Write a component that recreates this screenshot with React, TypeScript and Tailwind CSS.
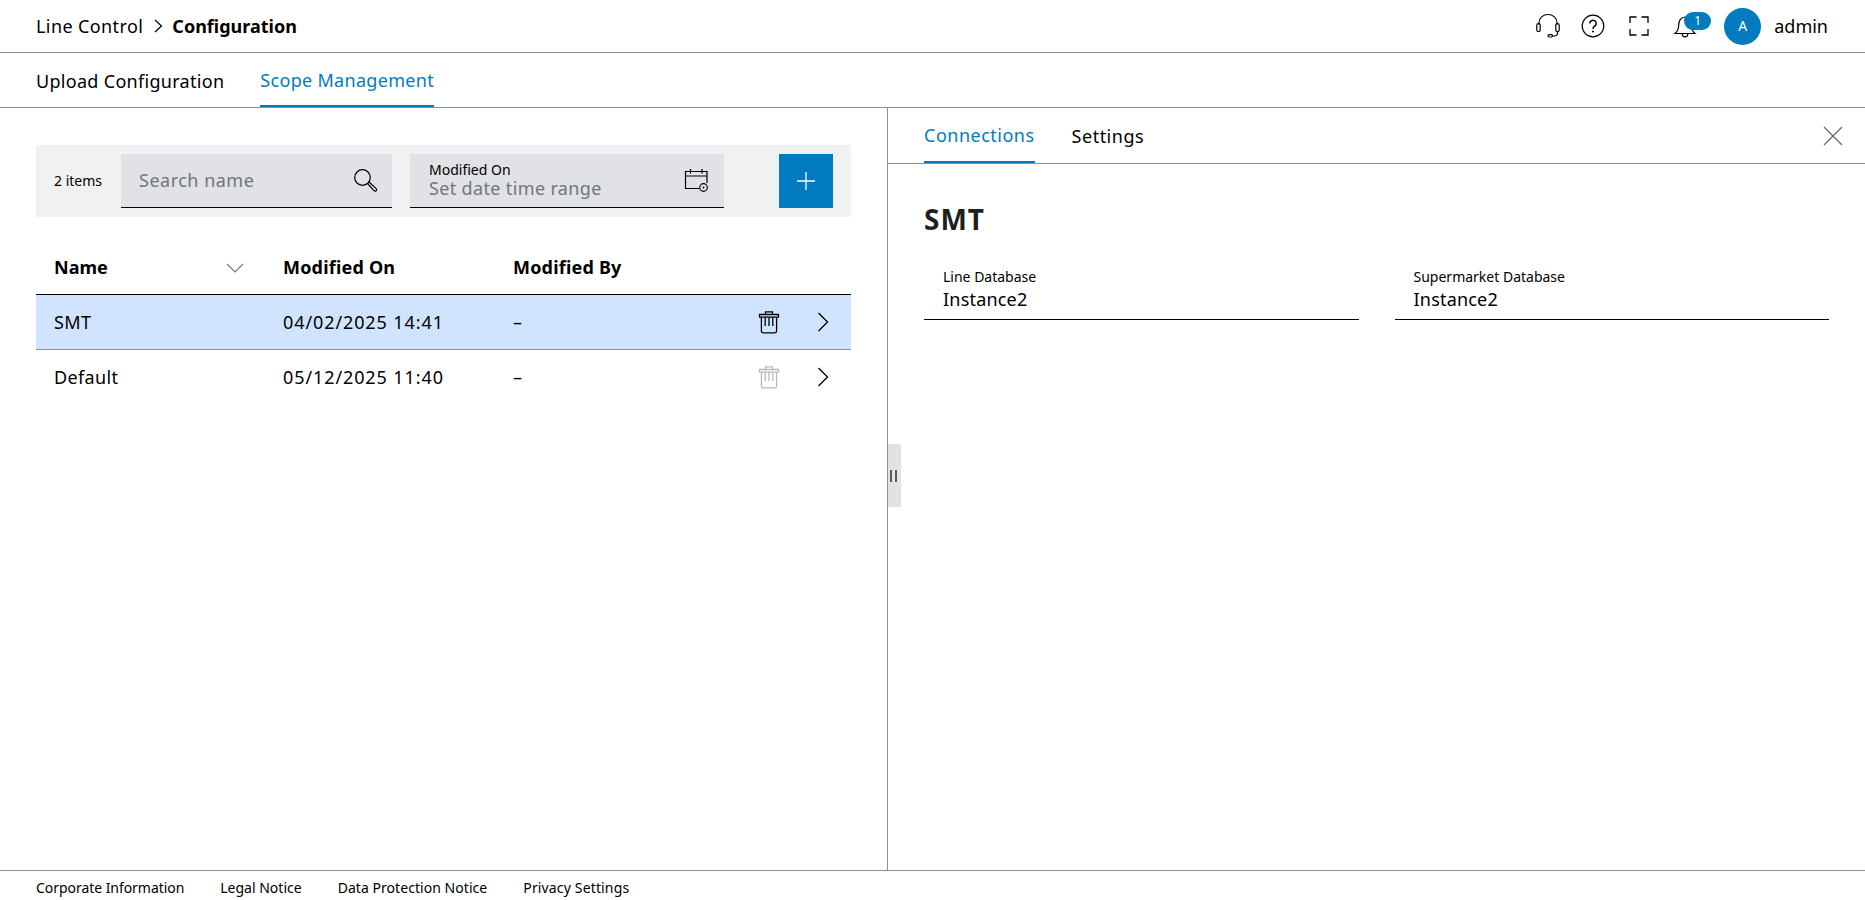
import React from "react";

const font = { fontFamily: '"Noto Sans", "Liberation Sans", sans-serif' };

function Headset() {
  return (
    <svg width="26" height="26" viewBox="0 0 26 26" fill="none" stroke="#000" strokeWidth="1.2">
      <path d="M4 12 V9.5 a9 8 0 0 1 18 0 V12" />
      <rect x="1.8" y="10.5" width="3.4" height="8" rx="1.6" />
      <rect x="20.8" y="10.5" width="3.4" height="8" rx="1.6" />
      <path d="M22.5 18.5 V20.5 a3 3 0 0 1 -3 2.5 H17" />
      <rect x="13" y="21.6" width="4.5" height="2.4" rx="1.2" />
    </svg>
  );
}
function Help() {
  return (
    <svg width="26" height="26" viewBox="0 0 26 26" fill="none" stroke="#000" strokeWidth="1.2">
      <circle cx="13" cy="13" r="10.8" />
      <path d="M9.8 10.4 a3.2 3.1 0 1 1 5 2.6 c-1.2.8 -1.8 1.4 -1.8 3" strokeWidth="1.5" />
      <circle cx="13" cy="18.6" r="1" fill="#000" stroke="none" />
    </svg>
  );
}
function Fullscreen() {
  return (
    <svg width="20" height="20" viewBox="0 0 20 20" fill="none" stroke="#000" strokeWidth="1.3">
      <path d="M1 7 V1 H7.5 M12.5 1 H19 V7 M19 13 V19 H12.5 M7.5 19 H1 V13" />
    </svg>
  );
}
function Bell() {
  return (
    <svg width="24" height="26" viewBox="0 0 24 26" fill="none" stroke="#000" strokeWidth="1.2">
      <path d="M2 20.5 c2.5 -2 3.6 -3.6 3.6 -8 c0 -5 2.6 -8.5 6.4 -8.5 s6.4 3.5 6.4 8.5 c0 4.4 1.1 6 3.6 8 Z" />
      <path d="M9.2 21 a2.8 2.8 0 0 0 5.6 0" />
    </svg>
  );
}
function Search() {
  return (
    <svg width="25" height="25" viewBox="0 0 25 25" fill="none" stroke="#000" strokeWidth="1.2">
      <circle cx="9.5" cy="9.5" r="7.8" />
      <path d="M14.5 15.5 L21 22.6 a1.4 1.4 0 0 0 2.2 -2 L16 14" />
    </svg>
  );
}
function Calendar() {
  return (
    <svg width="25" height="25" viewBox="0 0 25 25" fill="none" stroke="#000" strokeWidth="1.2">
      <path d="M15 20.5 H1.5 V3.5 H23 V15" />
      <path d="M1.5 8 H23 M6.5 1 V5.5 M18 1 V5.5" />
      <circle cx="19.5" cy="19.5" r="3.8" />
      <circle cx="19.5" cy="19.5" r="0.9" fill="#000" stroke="none" />
    </svg>
  );
}
function Trash({ color }: { color: string }) {
  return (
    <svg width="22" height="24" viewBox="0 0 22 24" fill="none" stroke={color} strokeWidth="1.3">
      <path d="M1.5 4.5 H20.5 V7.2 H1.5 Z" />
      <path d="M7.5 4.2 V1.8 H14.5 V4.2" />
      <path d="M3.4 7.2 V21 a1.8 1.8 0 0 0 1.8 1.8 H16.8 a1.8 1.8 0 0 0 1.8 -1.8 V7.2" />
      <path d="M7.2 7.2 V16 M11 7.2 V16 M14.8 7.2 V16" />
    </svg>
  );
}
function Chevron({ className = "" }: { className?: string }) {
  return (
    <svg className={className} width="12" height="20" viewBox="0 0 12 20" fill="none" stroke="#000" strokeWidth="1.3">
      <path d="M1.5 1 L10.5 10 L1.5 19" />
    </svg>
  );
}

function Row({ name, date, selected, trash }: { name: string; date: string; selected?: boolean; trash: string }) {
  return (
    <div className={`flex items-center h-[55px] pl-[18px] text-[18px] tracking-[0.35px] text-black border-b ${selected ? "bg-[#d1e4ff] border-[#8a9097]" : "bg-white border-transparent"}`}>
      <div className="w-[229px]">{name}</div>
      <div className="w-[230px] tracking-[0.9px]">{date}</div>
      <div className="w-[230px]">–</div>
      <div className="flex items-center justify-center w-[52px]">
        <Trash color={trash} />
      </div>
      <div className="flex items-center justify-center w-[56px]">
        <Chevron />
      </div>
    </div>
  );
}

export default function App() {
  return (
    <div className="flex flex-col h-screen bg-white text-black overflow-hidden" style={font}>
      <header className="flex items-center justify-between h-[53px] shrink-0 border-b border-[#8a9097] pl-9 pr-[37px]">
        <div className="flex items-center text-[18px]">
          <span className="tracking-[0.4px]">Line Control</span>
          <svg className="ml-[11px] mr-[9px]" width="9" height="14" viewBox="0 0 9 14" fill="none" stroke="#000" strokeWidth="1.2">
            <path d="M1 1 L7.5 7 L1 13" />
          </svg>
          <span className="font-bold">Configuration</span>
        </div>
        <div className="flex items-center">
          <Headset />
          <div className="ml-[19px]"><Help /></div>
          <div className="ml-[23px]"><Fullscreen /></div>
          <div className="relative ml-[24px] w-[24px]">
            <Bell />
            <span className="absolute left-[11px] -top-[1px] flex items-center justify-center w-[27px] h-[18px] rounded-full bg-[#007bc0] text-white text-xs">1</span>
          </div>
          <div className="ml-[27px] flex items-center justify-center w-[37px] h-[37px] rounded-full bg-[#007bc0] text-white text-sm">A</div>
          <span className="ml-[13px] text-[18px]">admin</span>
        </div>
      </header>

      <nav className="flex items-stretch gap-9 h-[55px] shrink-0 border-b border-[#8a9097] px-9 text-[18px] tracking-[0.3px]">
        <div className="flex items-center h-[54px] pt-[2px]">Upload Configuration</div>
        <div className="flex items-center h-[54px] pt-[2px] text-[#007bc0] border-b-2 border-[#007bc0]">Scope Management</div>
      </nav>

      <main className="flex flex-1 min-h-0">
        <section className="w-[888px] shrink-0 relative border-r border-[#8a9097] pl-9 pr-9 pt-[37px]">
          <div className="flex items-center h-[72px] bg-[#eff1f2] px-[18px]">
            <span className="w-[67px] text-sm">2 items</span>
            <div className="flex items-center justify-between w-[271px] h-[54px] bg-[#e0e2e5] border-b border-black pl-[18px] pr-[14px]">
              <span className="text-[#71767c] text-[18px] tracking-[0.5px]">Search name</span>
              <Search />
            </div>
            <div className="flex items-center justify-between w-[314px] h-[54px] ml-[18px] bg-[#e0e2e5] border-b border-black pl-[19px] pr-[15px]">
              <div className="flex flex-col pb-[2px]">
                <span className="text-sm leading-[16px]">Modified On</span>
                <span className="text-[#71767c] text-[18px] tracking-[0.35px] leading-[20px]">Set date time range</span>
              </div>
              <Calendar />
            </div>
            <button className="flex items-center justify-center w-[54px] h-[54px] ml-auto bg-[#007bc0]">
              <svg width="20" height="20" viewBox="0 0 20 20" stroke="#fff" strokeWidth="1.3" fill="none">
                <path d="M10 1 V19 M1 10 H19" />
              </svg>
            </button>
          </div>

          <div className="flex items-center h-[78px] pt-[24px] pl-[18px] border-b border-black font-bold text-[18px]">
            <div className="w-[229px] flex items-center justify-between pr-[39px]">
              <span>Name</span>
              <svg width="18" height="10" viewBox="0 0 18 10" fill="none" stroke="#71767c" strokeWidth="1.1">
                <path d="M1 1 L9 9 L17 1" />
              </svg>
            </div>
            <div className="w-[230px] tracking-[0.2px]">Modified On</div>
            <div className="w-[230px] tracking-[0.2px]">Modified By</div>
          </div>
          <Row name="SMT" date="04/02/2025 14:41" selected trash="#000" />
          <Row name="Default" date="05/12/2025 11:40" trash="#b4b9bf" />

          <div className="absolute -right-[14px] top-[336px] flex items-center gap-[3px] pl-[2px] w-[13px] h-[63px] bg-[#e0e2e5] z-10">
            <span className="block w-[2px] h-[12px] bg-[#5f5a55]" />
            <span className="block w-[2px] h-[12px] bg-[#5f5a55]" />
          </div>
        </section>

        <section className="flex-1 flex flex-col min-w-0">
          <div className="flex items-stretch gap-[37px] h-[56px] shrink-0 border-b border-[#8a9097] px-9 text-[18px] tracking-[0.5px] relative">
            <div className="flex items-center h-[55px] pt-[2px] text-[#007bc0] border-b-2 border-[#007bc0]">Connections</div>
            <div className="flex items-center h-[55px] pt-[2px]">Settings</div>
            <svg className="absolute right-[22px] top-[18px]" width="20" height="20" viewBox="0 0 20 20" fill="none" stroke="#5f656b" strokeWidth="1.2">
              <path d="M1 1 L19 19 M19 1 L1 19" />
            </svg>
          </div>
          <div className="px-9 pt-[39px]">
            <h2 className="text-[28px] tracking-[1px] font-bold text-[#1f1f1f] leading-[32px]">SMT</h2>
            <div className="grid grid-cols-2 gap-9 mt-[30px]">
              {["Line Database", "Supermarket Database"].map((l) => (
                <div key={l} className="h-[55px] pl-[19px] border-b border-black">
                  <div className="text-sm leading-[15px] pt-[4px]">{l}</div>
                  <div className="text-[18px] tracking-[0.2px] leading-[22px] mt-[4px]">Instance2</div>
                </div>
              ))}
            </div>
          </div>
        </section>
      </main>

      <footer className="flex items-center gap-9 h-[30px] pt-[4px] shrink-0 border-t border-[#8a9097] px-9 text-sm">
        <span className="tracking-[-0.05px]">Corporate Information</span>
        <span>Legal Notice</span>
        <span className="tracking-[0.05px]">Data Protection Notice</span>
        <span className="tracking-[0.15px]">Privacy Settings</span>
      </footer>
    </div>
  );
}
